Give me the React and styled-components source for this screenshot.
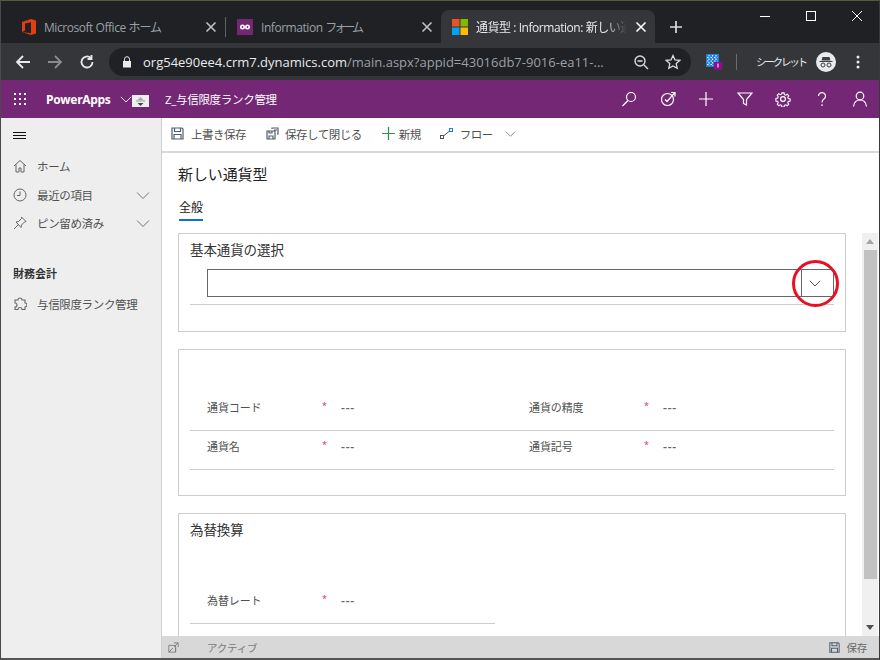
import * as React from 'react'
import styled, { createGlobalStyle } from 'styled-components'

const Global = createGlobalStyle`
  html, body { margin: 0; padding: 0; background: #fff; overflow: hidden; }
  body { font-family: "Open Sans", "Noto Sans CJK JP", sans-serif; }
  * { box-sizing: border-box; }
`

const Page = styled.div`
  width: 880px;
  height: 660px;
  display: flex;
  flex-direction: column;
  overflow: hidden;
  border-top: 1px solid #565c38;
  border-left: 1px solid #4a4a4a;
  border-right: 1px solid #3a3a3a;
  background: #202124;
`

/* browser chrome */
const TabStrip = styled.div`
  height: 42px;
  display: flex;
  align-items: flex-end;
  background: #202124;
  flex: none;
`
const Tab = styled.div`
  width: ${({ $w }) => $w}px;
  height: 33px;
  display: flex;
  align-items: center;
  padding: 0 8px 0 ${({ $pl }) => $pl}px;
  gap: 8px;
  border-radius: 8px 8px 0 0;
  background: ${({ $active }) => ($active ? '#35363a' : 'transparent')};
  color: ${({ $active }) => ($active ? '#e8eaed' : '#9aa0a6')};
  font-size: 12px;
  flex: none;
`
const TabDivider = styled.div`
  width: 1px;
  height: 20px;
  background: #5f6368;
  margin-bottom: 6px;
  flex: none;
`
const TabTitle = styled.span`
  flex: 1;
  white-space: nowrap;
  overflow: hidden;
  letter-spacing: -0.45px;
  ${({ $fade }) => $fade && 'mask-image: linear-gradient(to right, #000 85%, transparent);'}
`
const Narrow = styled.span`
  letter-spacing: ${({ $s }) => $s}px;
`
const TabClose = styled.span`
  width: 12px;
  height: 12px;
  display: flex;
  flex: none;
  color: ${({ $active }) => ($active ? '#fff' : '#bdc1c6')};
`
const NewTab = styled.div`
  width: 16px;
  height: 33px;
  margin-left: 14px;
  display: flex;
  align-items: center;
  color: #dadce0;
  flex: none;
`
const WinControls = styled.div`
  margin-left: auto;
  align-self: flex-start;
  display: flex;
  align-items: center;
  gap: 36px;
  height: 28px;
  padding: 1px 17px 0 0;
  color: #fff;
`
const ToolBar = styled.div`
  height: 37px;
  flex: none;
  background: #35363a;
  display: flex;
  align-items: center;
  color: #dee1e6;
`
const NavBtn = styled.span`
  width: 16px;
  height: 16px;
  display: flex;
  margin-left: ${({ $ml }) => $ml}px;
  color: ${({ $dim }) => ($dim ? '#8a8b8d' : '#e8eaed')};
  flex: none;
`
const Omnibox = styled.div`
  width: 582px;
  height: 28px;
  margin-left: 14px;
  border-radius: 14px;
  background: #202124;
  display: flex;
  align-items: center;
  padding: 0 10px 0 13px;
  font-size: 13px;
  white-space: nowrap;
  flex: none;
`
const Host = styled.span`
  color: #e8eaed;
  margin-left: 11px;
`
const UrlRest = styled.span`
  color: #9aa0a6;
  flex: 1;
  overflow: hidden;
`
const OmniIcon = styled.span`
  width: 16px;
  height: 16px;
  display: flex;
  margin-left: ${({ $ml }) => $ml}px;
  color: #dadce0;
  flex: none;
`
const ToolDivider = styled.div`
  width: 1px;
  height: 16px;
  background: #6a6c70;
  margin: 0 19px 0 14px;
  flex: none;
`
const Incognito = styled.span`
  font-size: 10.5px;
  color: #e8eaed;
  letter-spacing: -2.2px;
  white-space: nowrap;
  width: 60px;
  flex: none;
`
const Avatar = styled.span`
  width: 20px;
  height: 20px;
  border-radius: 50%;
  background: #e8eaed;
  display: flex;
  align-items: center;
  justify-content: center;
  flex: none;
`
const Dots = styled.span`
  width: 4px;
  height: 14px;
  margin-left: 20px;
  display: flex;
  color: #e8eaed;
  flex: none;
`

/* dynamics app bar */
const AppBar = styled.div`
  height: 38px;
  flex: none;
  background: #742774;
  display: flex;
  align-items: center;
  color: #fff;
`
const Waffle = styled.span`
  width: 14px;
  height: 14px;
  margin-left: 12px;
  display: flex;
  flex: none;
`
const AppName = styled.span`
  margin-left: 19px;
  font-size: 12px;
  font-weight: 700;
  width: 74px;
  white-space: nowrap;
  letter-spacing: -0.3px;
  flex: none;
`
const AppChevron = styled.span`
  width: 12px;
  height: 12px;
  display: flex;
  flex: none;
`
const GripBox = styled.span`
  width: 17px;
  height: 12px;
  background: #eeeeee;
  display: flex;
  flex: none;
  margin-top: 3px;
`
const Crumb = styled.span`
  margin-left: 16px;
  font-size: 11.5px;
  letter-spacing: -0.3px;
  white-space: nowrap;
`
const AppIcons = styled.div`
  margin-left: auto;
  display: flex;
  align-items: center;
  gap: 22.5px;
  padding-right: 11px;
`
const AppIcon = styled.span`
  width: 16px;
  height: 16px;
  display: flex;
  flex: none;
`

/* body */
const Body = styled.div`
  flex: 1;
  min-height: 0;
  display: flex;
  background: #fff;
`
const Sidebar = styled.nav`
  width: 161px;
  flex: none;
  background: #eeeeee;
  border-right: 1px solid #d0d0d0;
  display: flex;
  flex-direction: column;
  color: #505050;
`
const Hamburger = styled.span`
  display: flex;
  width: 14px;
  height: 10px;
  margin: 13px 0 0 12px;
  color: #111;
`
const NavItem = styled.div`
  height: 28.5px;
  display: flex;
  align-items: center;
  padding: 0 10px 0 12px;
  font-size: 11.5px;
  margin-top: ${({ $mt }) => $mt || 0}px;
`
const NavIcon = styled.span`
  width: 14px;
  height: 14px;
  display: flex;
  flex: none;
  margin-right: 10px;
  color: #666;
`
const NavLabel = styled.span`
  flex: 1;
  white-space: nowrap;
  letter-spacing: -0.35px;
`
const NavChevron = styled.span`
  width: 14px;
  height: 14px;
  display: flex;
  margin-right: 1px;
  color: #6f6f8c;
`
const NavGroup = styled.div`
  margin: 27.5px 0 0 12px;
  font-size: 11px;
  font-weight: 700;
  color: #333;
  height: 20px;
`
const Main = styled.main`
  flex: 1;
  min-width: 0;
  display: flex;
  flex-direction: column;
`
const CommandBar = styled.div`
  height: 35px;
  flex: none;
  display: flex;
  align-items: center;
  padding: 0 0 2px 9px;
  border-bottom: 2px solid #d8d8d8;
  color: #505050;
  font-size: 11.5px;
`
const Cmd = styled.div`
  display: flex;
  align-items: center;
  gap: ${({ $gap }) => $gap}px;
  margin-right: ${({ $mr }) => $mr}px;
  white-space: nowrap;
  letter-spacing: -0.5px;
`
const CmdIcon = styled.span`
  width: ${({ $size }) => $size || 13}px;
  height: ${({ $size }) => $size || 13}px;
  display: flex;
  flex: none;
`
const CmdChevron = styled.span`
  width: 11px;
  height: 11px;
  margin-left: 5px;
  display: flex;
  color: #6f6f8c;
`
const Content = styled.div`
  flex: 1;
  min-height: 0;
  overflow: hidden;
  display: flex;
  flex-direction: column;
`
const FormTitle = styled.h1`
  margin: 11px 0 0 16px;
  font-size: 15px;
  font-weight: 400;
  line-height: 20px;
  color: #222;
  letter-spacing: -0.1px;
`
const Tabs = styled.div`
  margin: 11px 0 0 17px;
  height: 21px;
`
const TabLink = styled.span`
  display: inline-block;
  height: 21px;
  font-size: 12px;
  line-height: 15px;
  color: #222;
  border-bottom: 2px solid #0f6fe0;
`
const FormArea = styled.div`
  flex: 1;
  min-height: 0;
  display: flex;
  gap: 16px;
  padding: 17px 0 0 16px;
  overflow: hidden;
`
const Sections = styled.div`
  width: 668px;
  flex: none;
  display: flex;
  flex-direction: column;
  gap: 17px;
`
const Section = styled.section`
  height: ${({ $h }) => $h}px;
  flex: none;
  border: 1px solid #cccccc;
  padding: 0 11px;
  position: relative;
`
const SectionTitle = styled.h2`
  margin: 0;
  padding-top: 7px;
  font-size: 13.5px;
  line-height: 18px;
  font-weight: 400;
  color: #333;
  letter-spacing: -0.1px;
`
const LookupRow = styled.div`
  margin-top: 10px;
  height: 36px;
  display: flex;
  border-bottom: 1px solid #cccccc;
  padding: 0 0 7px 17px;
  width: 644px;
`
const LookupInput = styled.div`
  flex: 1;
  height: 28px;
  border: 1px solid #666666;
  display: flex;
  justify-content: flex-end;
`
const LookupButton = styled.div`
  width: 32px;
  border-left: 1px solid #666666;
  display: flex;
  align-items: center;
  justify-content: center;
  padding-right: 5px;
  color: #333;
`
const RedCircle = styled.div`
  position: absolute;
  right: 6px;
  top: 26px;
  width: 47px;
  height: 47px;
  border: 3px solid #e81123;
  border-radius: 50%;
  pointer-events: none;
`
const FieldGrid = styled.div`
  display: grid;
  grid-template-columns: ${({ $cols }) => $cols};
  padding-top: ${({ $pt }) => $pt}px;
`
const Field = styled.div`
  height: 39px;
  display: grid;
  grid-template-columns: 115px 19px 1fr;
  align-items: center;
  padding: 0 0 8px 17px;
  border-bottom: 1px solid #cccccc;
  font-size: 11px;
  color: #505050;
  letter-spacing: -0.1px;
`
const Star = styled.span`
  color: #d9304f;
  font-size: 9px;
  margin-top: -4px;
`
const Dash = styled.span`
  color: #666;
  font-size: 12px;
  font-weight: 600;
  letter-spacing: 0.8px;
`
const ScrollBar = styled.div`
  width: 16px;
  flex: none;
  background: #f0f0f0;
  display: flex;
  flex-direction: column;
  align-items: center;
`
const ScrollArrow = styled.span`
  width: 0;
  height: 0;
  flex: none;
  margin: 6px 0;
  border-left: 4px solid transparent;
  border-right: 4px solid transparent;
  ${({ $down }) => ($down ? 'border-top: 5px solid #505050;' : 'border-bottom: 5px solid #a6a6a6;')}
`
const ScrollThumb = styled.div`
  width: 13px;
  height: 329px;
  background: #c2c2c2;
  flex: none;
`
const ScrollGap = styled.div`
  flex: 1;
`
const StatusBar = styled.footer`
  height: 22px;
  flex: none;
  background: #d8d8d8;
  display: flex;
  align-items: center;
  padding: 0 12px 0 6px;
  font-size: 10.5px;
  color: #7a7a7a;
  letter-spacing: -0.2px;
`
const StatusText = styled.span`
  margin-left: 28px;
`
const StatusSave = styled.div`
  margin-left: auto;
  display: flex;
  align-items: center;
  gap: 6px;
  color: #666;
`
const BottomEdge = styled.div`
  height: 2px;
  flex: none;
  background: #555;
`
const OfficeLogo = styled.span`
  width: 14px;
  height: 16px;
  display: flex;
  flex: none;
`
const Favicon = styled.span`
  width: 16px;
  height: 16px;
  flex: none;
  display: flex;
  background: ${({ $bg }) => $bg || 'transparent'};
`

const S = ({ children, w = 1.2, vb = 16 }) => (
  <svg width="100%" height="100%" viewBox={`0 0 ${vb} ${vb}`} fill="none" stroke="currentColor" strokeWidth={w}>{children}</svg>
)
const XIcon = ({ w = 1.6 }) => <S vb={12} w={w}><path d="M1.5 1.5l9 9M10.5 1.5l-9 9" /></S>
const Chevron = ({ w = 1 }) => <S vb={14} w={w}><path d="M1 4.5l6 6 6-6" /></S>
const SaveGlyph = () => (
  <S vb={13} w={1.2}>
    <g stroke="#505f6e">
      <path d="M1 1h10l1 1v10H1z" />
      <path d="M3.5 1v3.5h6V1M3 12V7.5h7V12" />
    </g>
  </S>
)
const ReqField = ({ label }) => <Field>{label}<Star>*</Star><Dash>---</Dash></Field>

export default function App() {
  return (
    <Page>
      <Global />
      <TabStrip>
        <Tab $w={224} $pl={21}>
          <OfficeLogo>
            <svg width="14" height="16" viewBox="0 0 14 16">
              <path d="M0 3l9-3 5 1.5v13L9 16l-9-3 9 1.3V3.2L3 4.5v7L0 13z" fill="#e23f0e" />
            </svg>
          </OfficeLogo>
          <TabTitle>Microsoft Office <Narrow $s={-1}>ホーム</Narrow></TabTitle>
          <TabClose><XIcon /></TabClose>
        </Tab>
        <TabDivider />
        <Tab $w={215} $pl={11}>
          <Favicon $bg="#742774">
            <svg width="16" height="16" viewBox="0 0 16 16" fill="none" stroke="#fff" strokeWidth="1.6">
              <circle cx="5.5" cy="8" r="1.7" /><circle cx="10.5" cy="8" r="1.7" />
            </svg>
          </Favicon>
          <TabTitle>Information <Narrow $s={-3}>フォーム</Narrow></TabTitle>
          <TabClose><XIcon /></TabClose>
        </Tab>
        <Tab $w={214} $pl={11} $active>
          <Favicon>
            <svg width="16" height="16" viewBox="0 0 16 16">
              <rect width="7.5" height="7.5" fill="#f25022" />
              <rect x="8.5" width="7.5" height="7.5" fill="#7fba00" />
              <rect y="8.5" width="7.5" height="7.5" fill="#00a4ef" />
              <rect x="8.5" y="8.5" width="7.5" height="7.5" fill="#ffb900" />
            </svg>
          </Favicon>
          <TabTitle $fade>通貨型 : Information: 新しい通</TabTitle>
          <TabClose $active><XIcon /></TabClose>
        </Tab>
        <NewTab>
          <svg width="14" height="14" viewBox="0 0 14 14" stroke="currentColor" strokeWidth="1.7"><path d="M7 1v12M1 7h12" /></svg>
        </NewTab>
        <WinControls>
          <svg width="10" height="10" viewBox="0 0 10 10" stroke="currentColor"><path d="M0 5.5h10" /></svg>
          <svg width="10" height="10" viewBox="0 0 10 10" fill="none" stroke="currentColor"><rect x=".5" y=".5" width="9" height="9" /></svg>
          <svg width="10" height="10" viewBox="0 0 10 10" stroke="currentColor"><path d="M0 0l10 10M10 0L0 10" /></svg>
        </WinControls>
      </TabStrip>

      <ToolBar>
        <NavBtn $ml={14}>
          <S w={1.8}><path d="M15 8H2M8 2L2 8l6 6" /></S>
        </NavBtn>
        <NavBtn $ml={16} $dim>
          <S w={1.8}><path d="M1 8h13M8 2l6 6-6 6" /></S>
        </NavBtn>
        <NavBtn $ml={16}>
          <S w={1.8}><path d="M13.5 8A5.5 5.5 0 1 1 11.8 4M12.5 1v4h-4" /></S>
        </NavBtn>
        <Omnibox>
          <svg width="10" height="12" viewBox="0 0 10 12" fill="#e8eaed"><path d="M1 5h8v6.5H1z" /><path d="M2.5 5V3.2a2.5 2.5 0 0 1 5 0V5" fill="none" stroke="#e8eaed" /></svg>
          <Host>org54e90ee4.crm7.dynamics.com</Host>
          <UrlRest>/main.aspx?appid=43016db7-9016-ea11-...</UrlRest>
          <OmniIcon $ml={8}>
            <S w={1.4}><circle cx="7" cy="7" r="5" /><path d="M11 11l4 4M4.5 7h5" /></S>
          </OmniIcon>
          <OmniIcon $ml={16}>
            <S w={1.3}><path d="M8 1.5l2 4.4 4.8.5-3.6 3.2 1 4.7L8 11.9l-4.2 2.4 1-4.7L1.2 6.4 6 5.9z" /></S>
          </OmniIcon>
        </Omnibox>
        <OmniIcon $ml={15}>
          <svg width="16" height="16" viewBox="0 0 16 16">
            <rect x="0" y="0" width="13" height="13" fill="#1f7fd6" />
            <path d="M3 1v11M6.5 1v11M10 1v11M1 3.5h11M1 7h11M1 10.5h11" stroke="#e8f1fb" strokeWidth="1.2" strokeDasharray="1.5 2" />
            <rect x="8" y="8" width="8" height="8" fill="#8b0f8b" />
            <path d="M12 9.5v4" stroke="#fff" />
          </svg>
        </OmniIcon>
        <ToolDivider />
        <Incognito>シークレット</Incognito>
        <Avatar>
          <svg width="16" height="16" viewBox="0 0 16 16" fill="#3c4043">
            <path d="M4.5 3h7l1 3.5h-9zM1.5 7h13v1h-13z" />
            <circle cx="5" cy="11" r="2" fill="none" stroke="#3c4043" />
            <circle cx="11" cy="11" r="2" fill="none" stroke="#3c4043" />
          </svg>
        </Avatar>
        <Dots>
          <svg width="4" height="14" viewBox="0 0 4 14" fill="currentColor"><circle cx="2" cy="2" r="1.5" /><circle cx="2" cy="7" r="1.5" /><circle cx="2" cy="12" r="1.5" /></svg>
        </Dots>
      </ToolBar>

      <AppBar>
        <Waffle>
          <svg width="14" height="14" viewBox="0 0 14 14" fill="#fff">
            {[1, 6, 11].flatMap(y => [1, 6, 11].map(x => <rect key={`${x}-${y}`} x={x} y={y} width="2" height="2" />))}
          </svg>
        </Waffle>
        <AppName>PowerApps</AppName>
        <AppChevron><Chevron /></AppChevron>
        <GripBox>
          <svg width="17" height="12" viewBox="0 0 17 12">
            <path d="M8.5 2l3 3h-6z" fill="#aaa" /><path d="M4 6h9" stroke="#999" /><path d="M8.5 11l3-3h-6z" fill="#444" />
          </svg>
        </GripBox>
        <Crumb>Z_与信限度ランク管理</Crumb>
        <AppIcons>
          <AppIcon><S><circle cx="10" cy="6" r="4.5" /><path d="M7 9.5L1.5 15" /></S></AppIcon>
          <AppIcon><S><circle cx="7.5" cy="8.5" r="6" /><path d="M5 8.5l2 2 7.5-8.5M11 1.5h4v4" /></S></AppIcon>
          <AppIcon><S><path d="M8 1v14M1 8h14" /></S></AppIcon>
          <AppIcon><S><path d="M1 2h14L9.5 8.5V14l-3-1.5v-4z" /></S></AppIcon>
          <AppIcon>
            <S>
              <circle cx="8" cy="8" r="2.4" />
              <path d="M6.8 1.2h2.4l.4 2 1.4.6 1.7-1.1 1.7 1.7-1.1 1.7.6 1.4 2 .4v2.4l-2 .4-.6 1.4 1.1 1.7-1.7 1.7-1.7-1.1-1.4.6-.4 2H6.8l-.4-2-1.4-.6-1.7 1.1-1.7-1.7 1.1-1.7-.6-1.4-2-.4V7.3l2-.4.6-1.4-1.1-1.7 1.7-1.7 1.7 1.1 1.4-.6z" transform="translate(.8 .8) scale(.9)" />
            </S>
          </AppIcon>
          <AppIcon><S><path d="M4.5 5a3.5 3.5 0 1 1 5.4 3C8.5 9 8 9.8 8 11.5" /><path d="M8 13.2V15" /></S></AppIcon>
          <AppIcon><S><circle cx="8" cy="5" r="3.8" /><path d="M1.5 15.5c.5-4 3-6.5 6.5-6.5s6 2.5 6.5 6.5" /></S></AppIcon>
        </AppIcons>
      </AppBar>

      <Body>
        <Sidebar>
          <Hamburger>
            <svg width="14" height="10" viewBox="0 0 14 10" stroke="currentColor"><path d="M0 1.5h13M0 4.5h13M0 7.5h13" /></svg>
          </Hamburger>
          <NavItem $mt={11}>
            <NavIcon><S vb={14} w={1}><path d="M1 7l6-5.5L13 7M3 5.5V13h3V9h2v4h3V5.5" /></S></NavIcon>
            <NavLabel>ホーム</NavLabel>
          </NavItem>
          <NavItem>
            <NavIcon><S vb={14} w={1}><circle cx="7" cy="7" r="6" /><path d="M7 3.5v4H4" /></S></NavIcon>
            <NavLabel>最近の項目</NavLabel>
            <NavChevron><Chevron /></NavChevron>
          </NavItem>
          <NavItem>
            <NavIcon><S vb={14} w={1}><path d="M8.5 1L13 5.5l-1.5.5-3 3-.5 2.5L3 6l2.500-.5 3-3zM5.500 8.500L1 13" /></S></NavIcon>
            <NavLabel>ピン留め済み</NavLabel>
            <NavChevron><Chevron /></NavChevron>
          </NavItem>
          <NavGroup>財務会計</NavGroup>
          <NavItem $mt={5}>
            <NavIcon><S vb={14} w={1.1}><path d="M5 3a2 2 0 0 1 4 0h3v3a2 2 0 0 1 0 4v2.5H9a2 2 0 0 0-4 0H2V10a2 2 0 0 0 0-4V3z" /></S></NavIcon>
            <NavLabel>与信限度ランク管理</NavLabel>
          </NavItem>
        </Sidebar>

        <Main>
          <CommandBar>
            <Cmd $mr={20} $gap={7}><CmdIcon><SaveGlyph /></CmdIcon>上書き保存</Cmd>
            <Cmd $mr={20} $gap={6}>
              <CmdIcon>
                <S vb={13}><g stroke="#505f6e"><path d="M1 4h8v8H1zM3 12V9h4v3M3 4v2h3V4M6 2V1h6v6h-1M8 3h3" /></g></S>
              </CmdIcon>
              保存して閉じる
            </Cmd>
            <Cmd $mr={19} $gap={4}>
              <CmdIcon><S vb={13} w={1.2}><path d="M6.5 0v13M0 6.5h13" stroke="#2e8b57" /></S></CmdIcon>
              新規
            </Cmd>
            <Cmd $mr={0} $gap={7}>
              <CmdIcon>
                <S vb={13} w={1}><rect x=".5" y="8.5" width="3" height="3" /><rect x="9.5" y="1.5" width="3" height="3" stroke="#1f7fd6" /><path d="M3.5 9L9.500 4" /></S>
              </CmdIcon>
              フロー
              <CmdChevron><Chevron /></CmdChevron>
            </Cmd>
          </CommandBar>
          <Content>
            <FormTitle>新しい通貨型</FormTitle>
            <Tabs><TabLink>全般</TabLink></Tabs>
            <FormArea>
              <Sections>
                <Section $h={99}>
                  <SectionTitle>基本通貨の選択</SectionTitle>
                  <LookupRow>
                    <LookupInput>
                      <LookupButton>
                        <svg width="12" height="12" viewBox="0 0 14 14" fill="none" stroke="currentColor"><path d="M1 4.5l6 6 6-6" /></svg>
                      </LookupButton>
                    </LookupInput>
                  </LookupRow>
                  <RedCircle />
                </Section>
                <Section $h={147}>
                  <FieldGrid $pt={42} $cols="322px 322px">
                    <ReqField label="通貨コード" />
                    <ReqField label="通貨の精度" />
                    <ReqField label="通貨名" />
                    <ReqField label="通貨記号" />
                  </FieldGrid>
                </Section>
                <Section $h={200}>
                  <SectionTitle>為替換算</SectionTitle>
                  <FieldGrid $pt={46} $cols="305px">
                    <ReqField label="為替レート" />
                  </FieldGrid>
                </Section>
              </Sections>
              <ScrollBar>
                <ScrollArrow />
                <ScrollThumb />
                <ScrollGap />
                <ScrollArrow $down />
              </ScrollBar>
            </FormArea>
          </Content>
          <StatusBar>
            <CmdIcon $size={11}>
              <S vb={13} w={1}><g stroke="#777"><path d="M1 4h8v8H1zM9 7v5M1 12l5-5M7 1h5v5M12 1L7 6" /></g></S>
            </CmdIcon>
            <StatusText>アクティブ</StatusText>
            <StatusSave><CmdIcon $size={11}><SaveGlyph /></CmdIcon>保存</StatusSave>
          </StatusBar>
        </Main>
      </Body>
      <BottomEdge />
    </Page>
  )
}
